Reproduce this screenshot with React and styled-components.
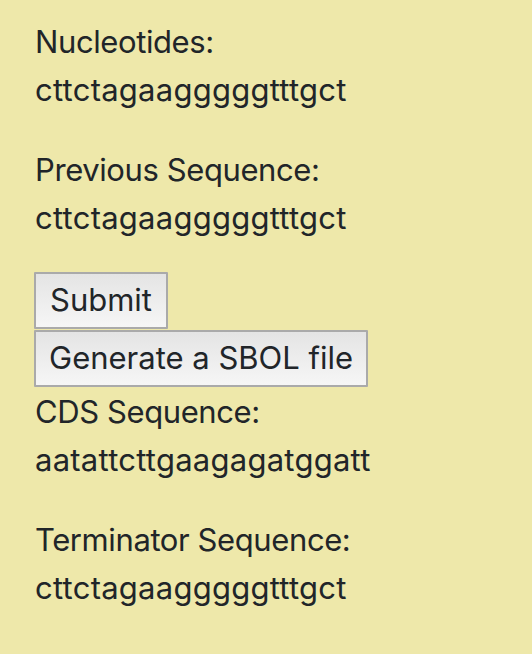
import React from "react";
import styled, { createGlobalStyle } from "styled-components";

const GlobalStyle = createGlobalStyle`
  html, body {
    margin: 0;
    padding: 0;
    background: #eee8aa;
  }
  body {
    font-family: "Inter", "Liberation Sans", sans-serif;
    color: #212529;
  }
`;

const sequences = {
  nucleotides: "cttctagaagggggtttgct",
  previous: "cttctagaagggggtttgct",
  cds: "aatattcttgaagagatggatt",
  terminator: "cttctagaagggggtttgct",
};

const Entry = ({ label, value, before }) => (
  <Field $before={before}>
    <Label>{label}</Label>
    <br />
    <Seq>{value}</Seq>
  </Field>
);

const App = () => {
  return (
    <>
      <GlobalStyle />
      <Page>
        <Entry label="Nucleotides:" value={sequences.nucleotides} />
        <Entry label="Previous Sequence:" value={sequences.previous} before />
        <Actions>
          <Btn $wide>Submit</Btn>
          <Btn>Generate a SBOL file</Btn>
        </Actions>
        <Entry label="CDS Sequence:" value={sequences.cds} />
        <Entry label="Terminator Sequence:" value={sequences.terminator} />
      </Page>
    </>
  );
};

export default App;

const Page = styled.div`
  min-height: 654px;
  box-sizing: border-box;
  padding: 18px 34px 0 35px;
  font-size: 31px;
  line-height: 48px;
`;

const Field = styled.p`
  margin: 0 0 ${(p) => (p.$before ? "30px" : "32px")};
`;

const Label = styled.span`
  letter-spacing: -0.4px;
`;

const Seq = styled.span`
  letter-spacing: 0.25px;
`;

const Actions = styled.div`
  display: flex;
  flex-direction: column;
  align-items: flex-start;
  gap: 1px;
  margin-left: -1px;
  margin-bottom: 1px;
`;

const Btn = styled.button`
  font-family: inherit;
  font-size: 31px;
  line-height: 48px;
  color: #212529;
  padding: 2px ${(p) => (p.$wide ? "14px" : "13px")} 3px;
  border: 2px solid #aaaaaa;
  border-radius: 1px;
  background: linear-gradient(#e4e4e4, #f6f6f6);
  cursor: pointer;
`;
